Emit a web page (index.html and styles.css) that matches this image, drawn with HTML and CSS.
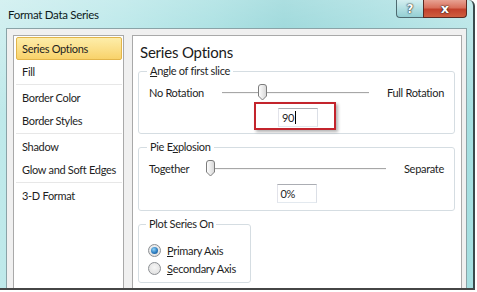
FILE: index.html
```html
<!DOCTYPE html>
<html lang="en">
<head>
    <meta charset="UTF-8">
    <meta name="viewport" content="width=device-width, initial-scale=1.0">
    <title>Format Data Series</title>
    <link rel="stylesheet" href="styles.css">
</head>
<body>
    <div class="window">
        <div class="titlebar">
            <span class="title">Format Data Series</span>
            <div class="caption-buttons">
                <div class="cap-btn help">?</div>
                <div class="cap-btn close">x</div>
            </div>
        </div>
        <div class="client">
            <ul class="nav-list">
                <li class="nav-item selected">Series Options</li>
                <li class="nav-item">Fill</li>
                <li class="nav-sep"></li>
                <li class="nav-item">Border Color</li>
                <li class="nav-item">Border Styles</li>
                <li class="nav-sep"></li>
                <li class="nav-item">Shadow</li>
                <li class="nav-item">Glow and Soft Edges</li>
                <li class="nav-sep"></li>
                <li class="nav-item">3-D Format</li>
            </ul>
            <div class="panel">
                <h2 class="panel-title">Series Options</h2>

                <fieldset class="group group-angle">
                    <legend><u>A</u>ngle of first slice</legend>
                    <div class="slider-row">
                        <span class="slider-label">No Rotation</span>
                        <div class="slider">
                            <div class="track"></div>
                            <svg class="thumb" style="left: 25%" width="11" height="17" viewBox="0 0 11 17">
                                <defs>
                                    <linearGradient id="tg1" x1="0" y1="0" x2="1" y2="0">
                                        <stop offset="0" stop-color="#ffffff"/>
                                        <stop offset="1" stop-color="#d6d6d6"/>
                                    </linearGradient>
                                </defs>
                                <path d="M1.5 3 Q1.5 .5 4 .5 H7 Q9.5 .5 9.5 3 V12 L5.5 16 L1.5 12 Z" fill="url(#tg1)" stroke="#7c7c7c"/>
                            </svg>
                        </div>
                        <span class="slider-label">Full Rotation</span>
                    </div>
                    <div class="value-row marked">
                        <div class="mark-box">
                            <div class="textbox">90<span class="caret"></span></div>
                        </div>
                    </div>
                </fieldset>

                <fieldset class="group group-explosion">
                    <legend>Pie E<u>x</u>plosion</legend>
                    <div class="slider-row">
                        <span class="slider-label">Together</span>
                        <div class="slider">
                            <div class="track"></div>
                            <svg class="thumb" style="left: 0%" width="11" height="17" viewBox="0 0 11 17">
                                <defs>
                                    <linearGradient id="tg2" x1="0" y1="0" x2="1" y2="0">
                                        <stop offset="0" stop-color="#ffffff"/>
                                        <stop offset="1" stop-color="#d6d6d6"/>
                                    </linearGradient>
                                </defs>
                                <path d="M1.5 3 Q1.5 .5 4 .5 H7 Q9.5 .5 9.5 3 V12 L5.5 16 L1.5 12 Z" fill="url(#tg2)" stroke="#7c7c7c"/>
                            </svg>
                        </div>
                        <span class="slider-label">Separate</span>
                    </div>
                    <div class="value-row">
                        <div class="textbox">0%</div>
                    </div>
                </fieldset>

                <fieldset class="group group-axis">
                    <legend>Plot Series On</legend>
                    <label class="radio-row">
                        <span class="radio checked"></span>
                        <span><u>P</u>rimary Axis</span>
                    </label>
                    <label class="radio-row">
                        <span class="radio"></span>
                        <span><u>S</u>econdary Axis</span>
                    </label>
                </fieldset>
            </div>
        </div>
    </div>
</body>
</html>
```

FILE: styles.css
```css
body {
    margin: 0;
    background-color: #ffffff;
    font-family: Lato, "Open Sans", sans-serif;
    font-size: 11px;
    letter-spacing: -0.3px;
    color: #1e1e1e;
}
.window {
    width: 473px;
    height: 288px;
    border-right: 2px solid #3b4a4d;
    border-bottom: 2px solid #464646;
    border-top-right-radius: 6px;
    background:
        linear-gradient(180deg, rgba(255,255,255,0.35), rgba(255,255,255,0) 40%),
        linear-gradient(90deg, #bfe9ea 0%, #a9e2e4 25%, #92d8da 45%, #7fcdd0 60%, #8fd5d8 78%, #a6dfe1 100%);
    display: flex;
    flex-direction: column;
    overflow: hidden;
}
.titlebar {
    height: 28px;
    display: flex;
    align-items: flex-start;
    justify-content: space-between;
    flex-shrink: 0;
}
.title {
    margin: 8px 0 0 8px;
    font-size: 11.5px;
    color: #0d1a1c;
}
.caption-buttons {
    display: flex;
    margin-right: 6px;
}
.cap-btn {
    height: 18px;
    box-sizing: border-box;
    display: flex;
    align-items: center;
    justify-content: center;
    font-family: "DejaVu Sans", sans-serif;
    font-weight: bold;
    letter-spacing: 0;
    color: #ffffff;
    border: 1px solid #4e6a70;
    border-top: none;
    text-shadow: 0 0 2px #222, 0 0 1px #000;
}
.help {
    width: 27px;
    font-size: 12px;
    border-right: none;
    border-bottom-left-radius: 4px;
    background: linear-gradient(180deg, #d4eef0 0%, #b3dfe2 50%, #94cfd3 100%);
}
.close {
    width: 44px;
    font-size: 13px;
    border-color: #5b2a22;
    border-bottom-right-radius: 4px;
    background: linear-gradient(180deg, #e7a293 0%, #d9705c 45%, #c2412c 55%, #cf5e3f 100%);
}
.client {
    flex: 1;
    margin: 0 6px 0 6px;
    border-top: 1px solid #8aa3a7;
    border-left: 1px solid #8aa3a7;
    border-right: 1px solid #8aa3a7;
    background-color: #f0f0f0;
    display: flex;
    gap: 8px;
    padding: 6px 4px 0 6px;
    overflow: hidden;
}
.nav-list {
    list-style: none;
    margin: 0;
    width: 106px;
    padding: 1px 1px 0 2px;
    background-color: #ffffff;
    border: 1px solid #a9a9a9;
    border-bottom: none;
    flex-shrink: 0;
}
.nav-item {
    height: 23px;
    box-sizing: border-box;
    padding-left: 5px;
    line-height: 21px;
    border: 1px solid transparent;
    white-space: nowrap;
}
.nav-item.selected {
    background: linear-gradient(180deg, #fdeda9 0%, #fbe08b 50%, #f8d26a 100%);
    border-color: #e2b54a;
    border-radius: 2px;
}
.nav-sep {
    height: 1px;
    margin: 1px 0;
    background-color: #e7e7e7;
}
.panel {
    flex: 1;
    min-width: 0;
    background-color: #ffffff;
    border: 1px solid #a9a9a9;
    border-bottom: none;
    padding: 6px 6px 0 5px;
    display: flex;
    flex-direction: column;
}
.panel-title {
    margin: 0 0 1px 2px;
    font-size: 15px;
    font-weight: normal;
    line-height: 20px;
    letter-spacing: -0.2px;
    color: #1b1b1b;
}
.group {
    margin: 0;
    padding: 0 10px;
    border: 1px solid #d5dde2;
    border-radius: 3px;
    min-width: 0;
}
.group legend {
    padding: 0 3px;
    margin-left: -2px;
    line-height: 16px;
}
.group-explosion {
    margin-top: 5px;
    padding-bottom: 7px;
}
.group-angle {
    padding-bottom: 3px;
}
.group-axis {
    margin-top: 5px;
    width: 113px;
    box-sizing: border-box;
    padding: 9px 0 5px 9px;
}
.group-axis legend {
    margin-top: -6px;
}
.slider-row {
    display: flex;
    align-items: center;
    height: 18px;
    margin-top: 4px;
}
.slider-label {
    white-space: nowrap;
}
.slider {
    flex: 1;
    position: relative;
    height: 18px;
    margin: 0 18px;
}
.track {
    position: absolute;
    left: 0;
    right: 0;
    top: 9px;
    height: 0;
    border-top: 1px solid #a7a7a7;
    border-bottom: 1px solid #f4f4f4;
}
.thumb {
    position: absolute;
    top: 1px;
    margin-left: -2px;
}
.value-row {
    display: flex;
    justify-content: center;
    margin-top: 7px;
}
.value-row.marked {
    margin-top: 1px;
}
.mark-box {
    border: 2px solid #c3242c;
    padding: 4px 16px 1px 22px;
    margin-left: -3px;
    box-shadow: 2px 2px 3px rgba(0, 0, 0, 0.3);
}
.textbox {
    width: 40px;
    height: 19px;
    box-sizing: border-box;
    border: 1px solid #abadb3;
    border-left-color: #e2e3ea;
    border-right-color: #dbdfe6;
    border-bottom-color: #e3e9ef;
    padding-left: 3px;
    line-height: 17px;
    background-color: #ffffff;
    display: flex;
    align-items: center;
}
.caret {
    display: inline-block;
    width: 1px;
    height: 13px;
    background-color: #000000;
    margin-left: 1px;
}
.radio-row {
    display: flex;
    align-items: center;
    gap: 6px;
    height: 18px;
}
.radio {
    width: 13px;
    height: 13px;
    box-sizing: border-box;
    border-radius: 50%;
    border: 1px solid #8c8f93;
    background: radial-gradient(circle at 50% 40%, #f6f6f6 0%, #dcdcdc 100%);
    display: flex;
    align-items: center;
    justify-content: center;
}
.radio.checked::after {
    content: "";
    width: 7px;
    height: 7px;
    border-radius: 50%;
    background: radial-gradient(circle at 40% 35%, #8fd3f7 0%, #2d7cc0 55%, #164f86 100%);
}
```
